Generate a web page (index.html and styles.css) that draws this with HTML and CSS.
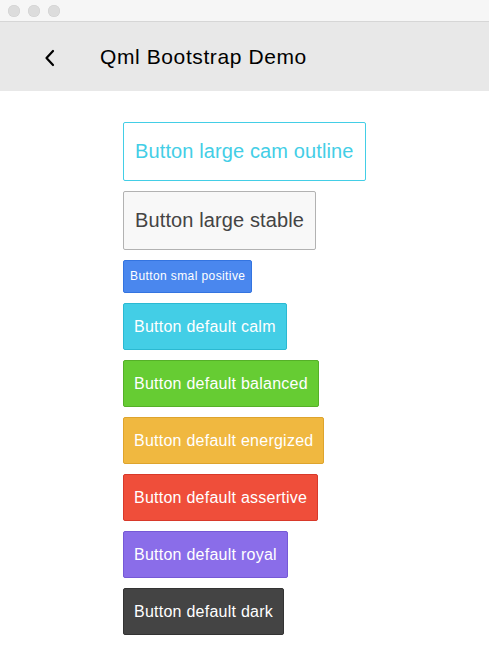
FILE: index.html
```html
<!DOCTYPE html>
<html>
<head>
<meta charset="utf-8">
<title>Qml Bootstrap Demo</title>
<link rel="stylesheet" href="styles.css">
</head>
<body>
<div class="window">
  <div class="titlebar">
    <span class="light"></span><span class="light"></span><span class="light"></span>
  </div>
  <div class="header">
    <svg class="back" width="14" height="18" viewBox="0 0 14 18"><path d="M10 2 L3.5 9 L10 16" fill="none" stroke="#000" stroke-width="2.2" stroke-linecap="round" stroke-linejoin="round"/></svg>
    <span class="title">Qml Bootstrap Demo</span>
  </div>
  <div class="content">
    <div class="btn btn-large btn-calm-outline">Button large cam outline</div>
    <div class="btn btn-large btn-stable">Button large stable</div>
    <div class="btn btn-small btn-positive">Button smal positive</div>
    <div class="btn btn-calm">Button default calm</div>
    <div class="btn btn-balanced">Button default balanced</div>
    <div class="btn btn-energized">Button default energized</div>
    <div class="btn btn-assertive">Button default assertive</div>
    <div class="btn btn-royal">Button default royal</div>
    <div class="btn btn-dark">Button default dark</div>
  </div>
</div>
</body>
</html>
```
FILE: styles.css
```css
html, body {
  margin: 0;
  padding: 0;
  background: #ffffff;
  font-family: "Liberation Sans", Arial, sans-serif;
}
.window {
  width: 489px;
  height: 666px;
  overflow: hidden;
}
.titlebar {
  height: 21px;
  background: #f6f6f6;
  border-bottom: 1px solid #d6d6d6;
  display: flex;
  align-items: center;
  gap: 8px;
  padding-left: 8px;
  box-sizing: content-box;
}
.light {
  width: 12px;
  height: 12px;
  border-radius: 50%;
  background: #dcdcdc;
  box-shadow: inset 0 0 0 0.5px #cfcfcf;
}
.header {
  height: 69px;
  background: #e8e8e8;
  display: flex;
  align-items: center;
}
.back {
  margin-left: 43px;
  margin-top: 2px;
}
.title {
  margin-left: 43px;
  font-size: 21px;
  letter-spacing: 0.6px;
  color: #000;
  margin-top: 1px;
}
.content {
  padding: 31px 0 0 123px;
  display: flex;
  flex-direction: column;
  align-items: flex-start;
  gap: 10px;
}
.btn {
  box-sizing: border-box;
  height: 47px;
  line-height: 45px;
  padding: 0 10px;
  font-size: 16px;
  letter-spacing: 0.25px;
  border: 1px solid transparent;
  border-radius: 2px;
  color: #fff;
  white-space: nowrap;
}
.btn-large {
  height: 59px;
  line-height: 57px;
  font-size: 20px;
  letter-spacing: 0.12px;
  padding: 0 11px;
}
.btn-small {
  height: 33px;
  line-height: 31px;
  font-size: 12px;
  letter-spacing: 0.4px;
  padding: 0 6px;
}
.btn-calm-outline {
  background: #fff;
  border-color: #43cee6;
  color: #43cee6;
}
.btn-stable {
  background: #f8f8f8;
  border-color: #b2b2b2;
  color: #444;
}
.btn-positive { background: #4a87ee; border-color: #3474e0; }
.btn-calm { background: #43cee6; border-color: #2bb9d2; }
.btn-balanced { background: #66cc33; border-color: #55b028; }
.btn-energized { background: #f0b840; border-color: #dea42d; }
.btn-assertive { background: #ef4e3a; border-color: #d8392a; }
.btn-royal { background: #8a6de9; border-color: #7659d6; }
.btn-dark { background: #444444; border-color: #333333; }
```
